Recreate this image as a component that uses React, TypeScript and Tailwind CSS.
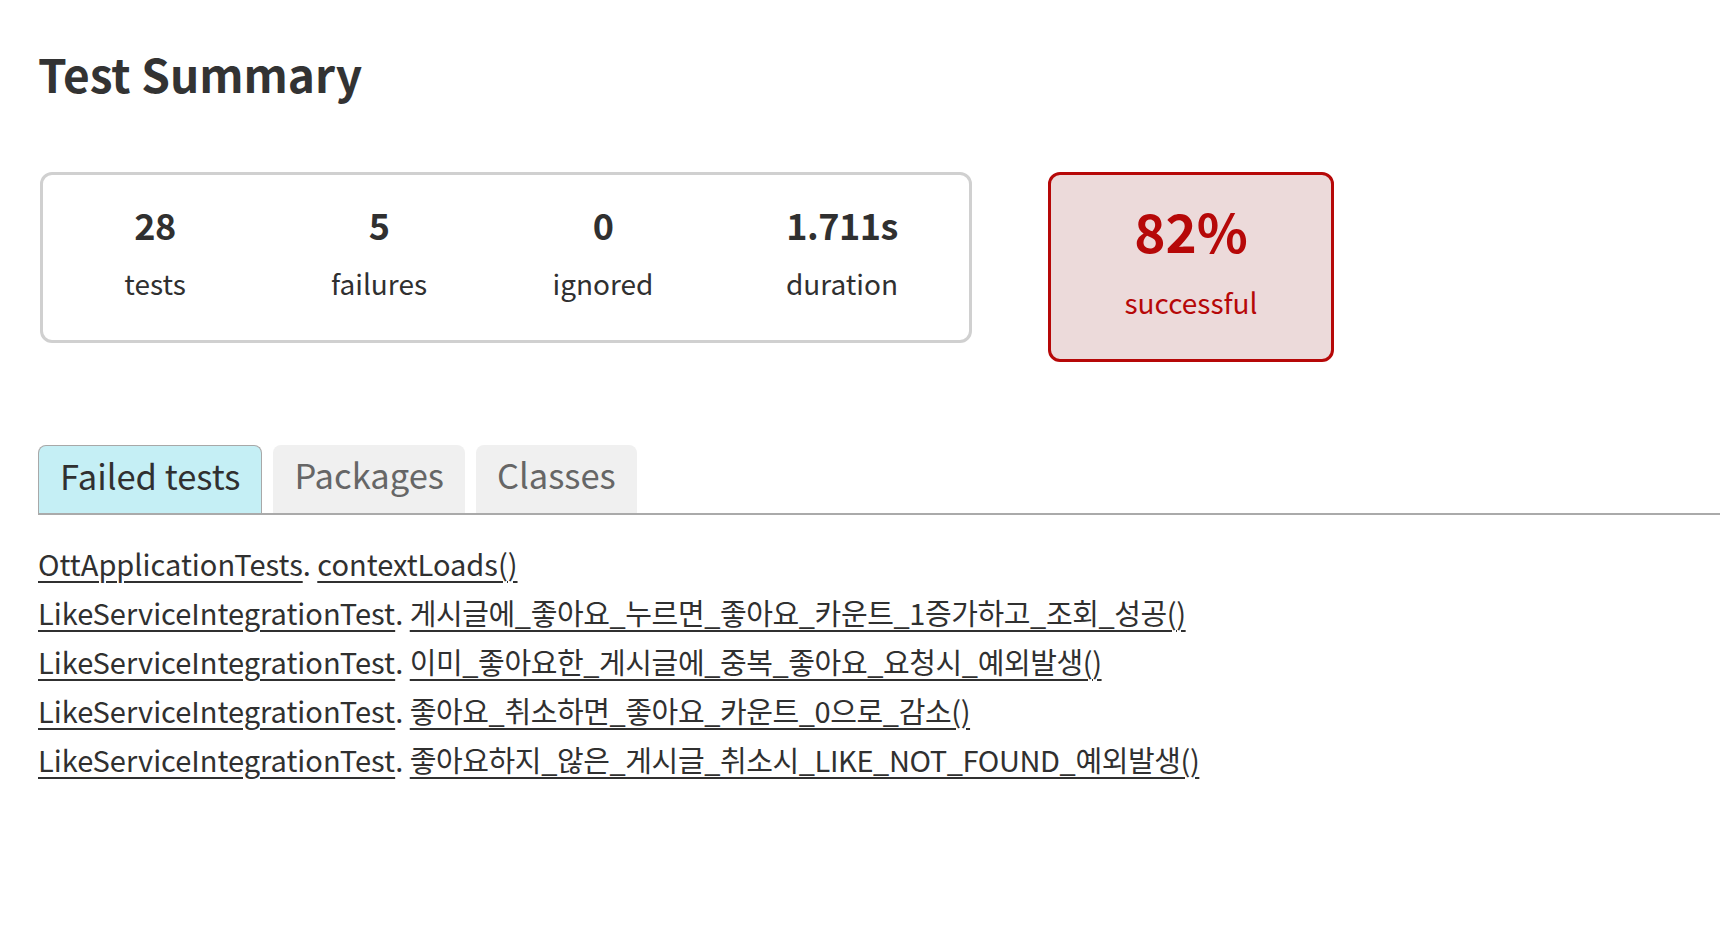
import React from "react";

const stats = [
  { value: "28", label: "tests", width: "w-[224px]" },
  { value: "5", label: "failures", width: "w-[224px]" },
  { value: "0", label: "ignored", width: "w-[224px]" },
  { value: "1.711s", label: "duration", width: "w-[254px]" },
];

const failed = [
  { cls: "OttApplicationTests", method: "contextLoads()", ko: false },
  { cls: "LikeServiceIntegrationTest", method: "게시글에_좋아요_누르면_좋아요_카운트_1증가하고_조회_성공()", ko: true },
  { cls: "LikeServiceIntegrationTest", method: "이미_좋아요한_게시글에_중복_좋아요_요청시_예외발생()", ko: true },
  { cls: "LikeServiceIntegrationTest", method: "좋아요_취소하면_좋아요_카운트_0으로_감소()", ko: true },
  { cls: "LikeServiceIntegrationTest", method: "좋아요하지_않은_게시글_취소시_LIKE_NOT_FOUND_예외발생()", ko: true },
];

export default function App() {
  return (
    <div className="min-h-screen bg-white text-[#303030] font-['Noto_Sans_CJK_KR','Noto_Sans',sans-serif]">
      <div className="pl-[38px] pt-[49px]">
        <h1 className="text-[46px] leading-[48px] font-bold text-[#333]">Test Summary</h1>

        {/* summary boxes */}
        <div className="mt-[75px] ml-[2px] flex items-start gap-[76px]">
          <div className="flex rounded-[12px] border-[3px] border-[#d0d0d0] pt-[29px] pb-[37px]">
            {stats.map((s) => (
              <div key={s.label} className={`${s.width} text-center`}>
                <div className="text-[36px] leading-[40px] font-bold tracking-[-0.5px]">{s.value}</div>
                <div className="mt-[19px] text-[28px] leading-[40px]">{s.label}</div>
              </div>
            ))}
          </div>
          <div className="w-[286px] rounded-[12px] border-[3px] border-[#b60808] bg-[#ecdada] pt-[27px] pb-[37px] text-center text-[#b60808]">
            <div className="text-[53px] leading-[56px] font-bold">82%</div>
            <div className="mt-[24px] text-[28px] leading-[40px]">successful</div>
          </div>
        </div>
      </div>

      {/* tabs */}
      <div className="mt-[83px] ml-[38px] flex items-end gap-[11px] border-b-2 border-[#aaaaaa]">
        <div className="flex h-[68px] items-center rounded-t-[8px] border border-b-0 border-[#a8a8a8] bg-[#c5eff5] px-[21px] pb-[8px] text-[34.5px] text-[#303030]">
          Failed tests
        </div>
        <div className="flex h-[68px] items-center rounded-t-[8px] bg-[#f0f0f0] px-[21px] pb-[8px] text-[34.5px] text-[#666]">
          Packages
        </div>
        <div className="flex h-[68px] items-center rounded-t-[8px] bg-[#f0f0f0] px-[21px] pb-[8px] text-[34.5px] text-[#666]">
          Classes
        </div>
      </div>

      {/* failed tests list */}
      <ul className="mt-[24px] pl-[38px]">
        {failed.map((f, i) => (
          <li key={i} className="text-[29px] leading-[49px]">
            <a className="underline decoration-2 underline-offset-[5px] cursor-pointer">{f.cls}</a>.{" "}
            <a className={`underline decoration-2 underline-offset-[5px] cursor-pointer ${f.ko ? "tracking-[-0.4px]" : ""}`}>
              {f.method}
            </a>
          </li>
        ))}
      </ul>
    </div>
  );
}
